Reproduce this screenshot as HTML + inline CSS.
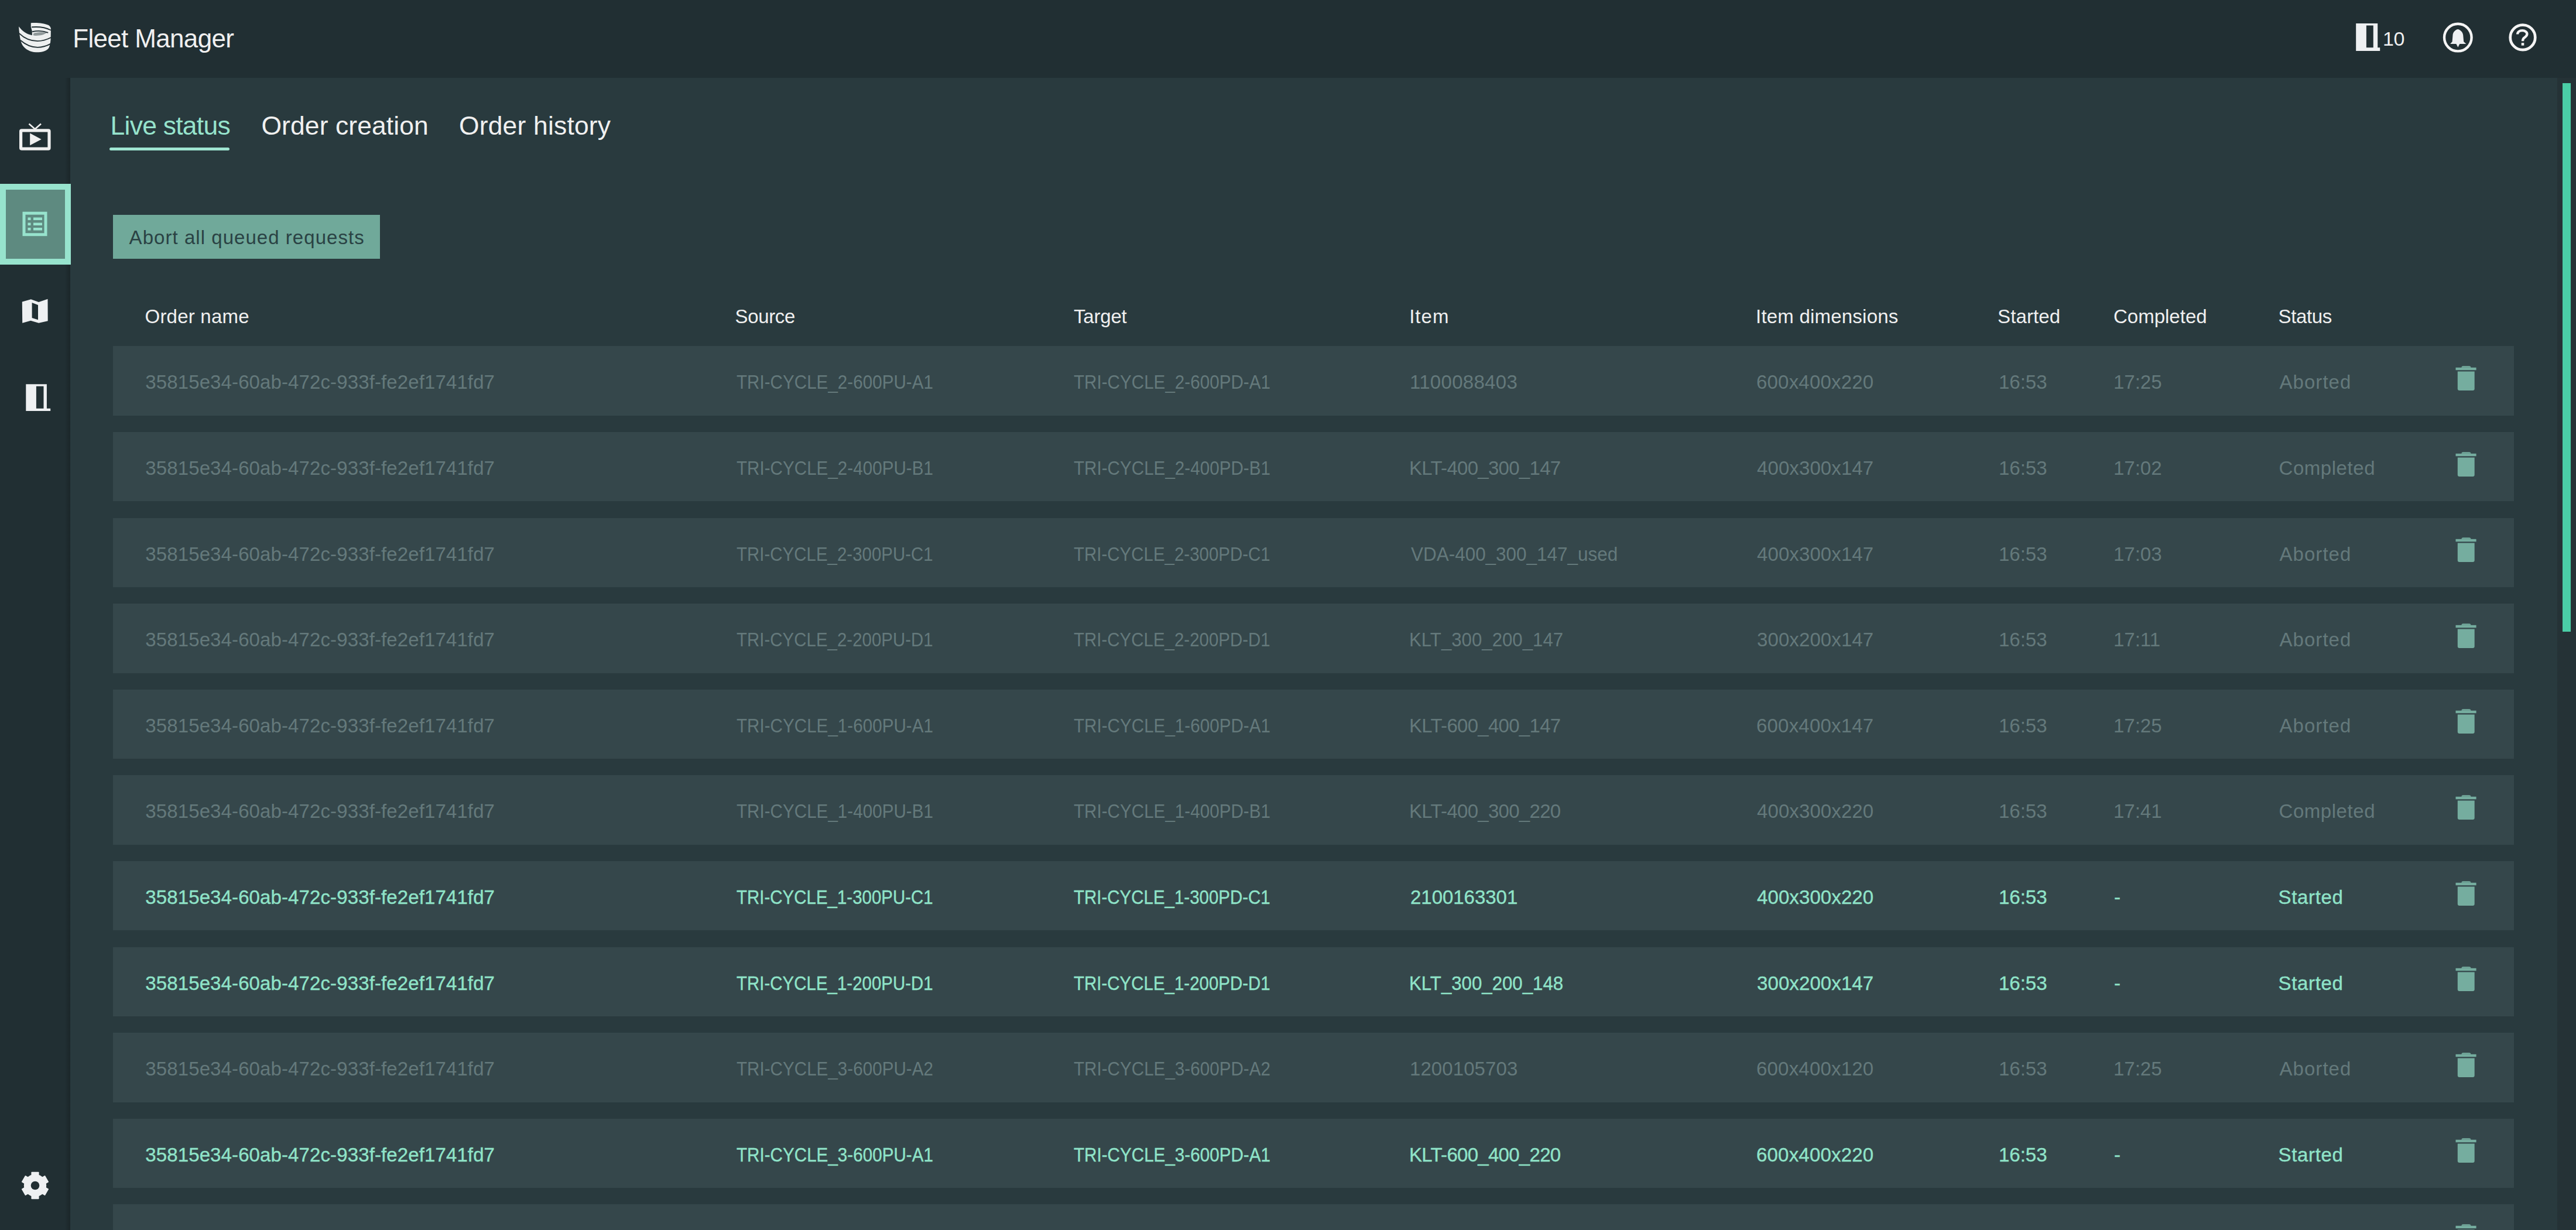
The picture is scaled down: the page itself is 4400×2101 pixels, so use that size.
<!DOCTYPE html>
<html><head><meta charset='utf-8'><title>Fleet Manager</title>
<style>
html,body{margin:0;padding:0;}
body{width:4400px;height:2101px;position:relative;overflow:hidden;background:#212f33;font-family:"Liberation Sans",sans-serif;}
.t{position:absolute;white-space:pre;}
.ic{position:absolute;overflow:visible;}
#content{position:absolute;left:120px;top:133px;width:4248px;height:1968px;background:#293a3e;}
#strip{position:absolute;left:4368px;top:133px;width:32px;height:1968px;background:#253236;}
#thumb{position:absolute;left:4377px;top:142px;width:14px;height:937px;background:#4acea6;}
#shadow{position:absolute;left:110px;top:133px;width:10px;height:1968px;background:linear-gradient(to right, rgba(0,0,0,0), rgba(0,0,0,0.18));}
.row{position:absolute;left:192.5px;width:4101.5px;height:118.5px;background:#35474b;}
#sel{position:absolute;left:0;top:314px;width:101px;height:118px;border:10px solid #97e3cd;background:#5e8a80;}
#btn{position:absolute;left:192.5px;top:366.8px;width:456px;height:75.2px;background:#70a99a;}
#uline{position:absolute;left:187px;top:251.5px;width:205px;height:5px;border-radius:2.5px;background:#9fe6d2;}
</style></head><body>
<div id='content'></div>
<div id='strip'></div>
<div id='thumb'></div>
<div id='shadow'></div>
<div id='sel'></div>
<div id='btn'></div>
<div id='uline'></div>
<div class='row' style='top:591.30px'></div>
<div class='row' style='top:737.90px'></div>
<div class='row' style='top:884.50px'></div>
<div class='row' style='top:1031.10px'></div>
<div class='row' style='top:1177.70px'></div>
<div class='row' style='top:1324.30px'></div>
<div class='row' style='top:1470.90px'></div>
<div class='row' style='top:1617.50px'></div>
<div class='row' style='top:1764.10px'></div>
<div class='row' style='top:1910.70px'></div>
<div class='row' style='top:2057.30px'></div>
<svg class='ic' style='left:4192px;top:620.00px' width='40' height='52' viewBox='0 0 40 52'>
<path d='M12.4 7.8 Q12.4 5.2 15 5.2 L25.5 5.2 Q28.5 5.2 28.5 7.8 Z' fill='#75ad9f'/>
<rect x='2.5' y='7.8' width='35.1' height='4.4' fill='#75ad9f'/>
<path d='M5.8 14.4 L34.7 14.4 L34.7 44 Q34.7 47 31.7 47 L8.8 47 Q5.8 47 5.8 44 Z' fill='#75ad9f'/>
</svg>
<svg class='ic' style='left:4192px;top:766.60px' width='40' height='52' viewBox='0 0 40 52'>
<path d='M12.4 7.8 Q12.4 5.2 15 5.2 L25.5 5.2 Q28.5 5.2 28.5 7.8 Z' fill='#75ad9f'/>
<rect x='2.5' y='7.8' width='35.1' height='4.4' fill='#75ad9f'/>
<path d='M5.8 14.4 L34.7 14.4 L34.7 44 Q34.7 47 31.7 47 L8.8 47 Q5.8 47 5.8 44 Z' fill='#75ad9f'/>
</svg>
<svg class='ic' style='left:4192px;top:913.20px' width='40' height='52' viewBox='0 0 40 52'>
<path d='M12.4 7.8 Q12.4 5.2 15 5.2 L25.5 5.2 Q28.5 5.2 28.5 7.8 Z' fill='#75ad9f'/>
<rect x='2.5' y='7.8' width='35.1' height='4.4' fill='#75ad9f'/>
<path d='M5.8 14.4 L34.7 14.4 L34.7 44 Q34.7 47 31.7 47 L8.8 47 Q5.8 47 5.8 44 Z' fill='#75ad9f'/>
</svg>
<svg class='ic' style='left:4192px;top:1059.80px' width='40' height='52' viewBox='0 0 40 52'>
<path d='M12.4 7.8 Q12.4 5.2 15 5.2 L25.5 5.2 Q28.5 5.2 28.5 7.8 Z' fill='#75ad9f'/>
<rect x='2.5' y='7.8' width='35.1' height='4.4' fill='#75ad9f'/>
<path d='M5.8 14.4 L34.7 14.4 L34.7 44 Q34.7 47 31.7 47 L8.8 47 Q5.8 47 5.8 44 Z' fill='#75ad9f'/>
</svg>
<svg class='ic' style='left:4192px;top:1206.40px' width='40' height='52' viewBox='0 0 40 52'>
<path d='M12.4 7.8 Q12.4 5.2 15 5.2 L25.5 5.2 Q28.5 5.2 28.5 7.8 Z' fill='#75ad9f'/>
<rect x='2.5' y='7.8' width='35.1' height='4.4' fill='#75ad9f'/>
<path d='M5.8 14.4 L34.7 14.4 L34.7 44 Q34.7 47 31.7 47 L8.8 47 Q5.8 47 5.8 44 Z' fill='#75ad9f'/>
</svg>
<svg class='ic' style='left:4192px;top:1353.00px' width='40' height='52' viewBox='0 0 40 52'>
<path d='M12.4 7.8 Q12.4 5.2 15 5.2 L25.5 5.2 Q28.5 5.2 28.5 7.8 Z' fill='#75ad9f'/>
<rect x='2.5' y='7.8' width='35.1' height='4.4' fill='#75ad9f'/>
<path d='M5.8 14.4 L34.7 14.4 L34.7 44 Q34.7 47 31.7 47 L8.8 47 Q5.8 47 5.8 44 Z' fill='#75ad9f'/>
</svg>
<svg class='ic' style='left:4192px;top:1499.60px' width='40' height='52' viewBox='0 0 40 52'>
<path d='M12.4 7.8 Q12.4 5.2 15 5.2 L25.5 5.2 Q28.5 5.2 28.5 7.8 Z' fill='#75ad9f'/>
<rect x='2.5' y='7.8' width='35.1' height='4.4' fill='#75ad9f'/>
<path d='M5.8 14.4 L34.7 14.4 L34.7 44 Q34.7 47 31.7 47 L8.8 47 Q5.8 47 5.8 44 Z' fill='#75ad9f'/>
</svg>
<svg class='ic' style='left:4192px;top:1646.20px' width='40' height='52' viewBox='0 0 40 52'>
<path d='M12.4 7.8 Q12.4 5.2 15 5.2 L25.5 5.2 Q28.5 5.2 28.5 7.8 Z' fill='#75ad9f'/>
<rect x='2.5' y='7.8' width='35.1' height='4.4' fill='#75ad9f'/>
<path d='M5.8 14.4 L34.7 14.4 L34.7 44 Q34.7 47 31.7 47 L8.8 47 Q5.8 47 5.8 44 Z' fill='#75ad9f'/>
</svg>
<svg class='ic' style='left:4192px;top:1792.80px' width='40' height='52' viewBox='0 0 40 52'>
<path d='M12.4 7.8 Q12.4 5.2 15 5.2 L25.5 5.2 Q28.5 5.2 28.5 7.8 Z' fill='#75ad9f'/>
<rect x='2.5' y='7.8' width='35.1' height='4.4' fill='#75ad9f'/>
<path d='M5.8 14.4 L34.7 14.4 L34.7 44 Q34.7 47 31.7 47 L8.8 47 Q5.8 47 5.8 44 Z' fill='#75ad9f'/>
</svg>
<svg class='ic' style='left:4192px;top:1939.40px' width='40' height='52' viewBox='0 0 40 52'>
<path d='M12.4 7.8 Q12.4 5.2 15 5.2 L25.5 5.2 Q28.5 5.2 28.5 7.8 Z' fill='#75ad9f'/>
<rect x='2.5' y='7.8' width='35.1' height='4.4' fill='#75ad9f'/>
<path d='M5.8 14.4 L34.7 14.4 L34.7 44 Q34.7 47 31.7 47 L8.8 47 Q5.8 47 5.8 44 Z' fill='#75ad9f'/>
</svg>
<svg class='ic' style='left:4192px;top:2086.00px' width='40' height='52' viewBox='0 0 40 52'>
<path d='M12.4 7.8 Q12.4 5.2 15 5.2 L25.5 5.2 Q28.5 5.2 28.5 7.8 Z' fill='#75ad9f'/>
<rect x='2.5' y='7.8' width='35.1' height='4.4' fill='#75ad9f'/>
<path d='M5.8 14.4 L34.7 14.4 L34.7 44 Q34.7 47 31.7 47 L8.8 47 Q5.8 47 5.8 44 Z' fill='#75ad9f'/>
</svg>
<!-- logo -->
<svg class='ic' style='left:30px;top:36px' width='60' height='56' viewBox='0 0 1318 1230'>
<path fill='#eef0f0' d='M500,70 C700,50 1000,75 1150,150 C1235,195 1255,260 1250,330 L1245,620 C1240,800 1215,920 1170,1010 C1080,1140 880,1175 690,1170 C470,1160 300,1060 190,910 C110,790 70,560 45,205 C180,380 330,490 545,535 L545,380 L500,215 Z'/>
<path fill='#8f9899' d='M585,480 C650,420 880,400 1090,440 C1000,520 800,560 600,545 Z'/>
<g fill='none' stroke='#212f33' stroke-width='42' stroke-linecap='round'>
<path d='M545,225 C800,205 1060,245 1235,335'/>
<path d='M570,395 C760,355 960,370 1130,430'/>
<path d='M70,470 C300,690 550,750 750,750 C950,750 1110,690 1260,615'/>
<path d='M120,730 C330,910 550,985 750,985 C950,985 1110,925 1240,855'/>
</g>
</svg>
<!-- header door icon -->
<svg class='ic' style='left:4024px;top:40px' width='42' height='47' viewBox='0 0 42 47'>
<path d='M0.2 0 H37.2 V41.2 H41.2 V46.9 H0.2 Z M17.9 3.4 H29.8 V41.2 H17.9 Z' fill='#eef0f2' fill-rule='evenodd'/>
</svg>
<!-- bell -->
<svg class='ic' style='left:4170px;top:36px' width='56' height='56' viewBox='0 0 56 56'>
<circle cx='28.3' cy='28.1' r='23.3' fill='none' stroke='#f4f4f4' stroke-width='4.4'/>
<path d='M28.1 13.9 C24.5 14.3 19.8 18.5 19.5 24 L18.6 35.3 L15.1 39 L42.4 39 L38.2 35.3 L37.2 24 C36.8 18.5 31.8 14.3 28.1 13.9 Z' fill='#eef0f2'/>
<path d='M25.4 39 L31.3 39 L28.4 44.8 Z' fill='#eef0f2'/>
</svg>
<!-- help -->
<svg class='ic' style='left:4281px;top:37px' width='56' height='56' viewBox='0 0 56 56'>
<circle cx='28' cy='26.9' r='21.3' fill='none' stroke='#f4f4f4' stroke-width='4.7'/>
<path d='M19.1 21.6 C19.1 17.5 22.5 15.2 27.3 15.2 C32 15.2 35.4 17.8 35.4 21 C35.4 24.5 32.5 26 30.5 27.5 C28.8 28.8 28 30 28 33.2' fill='none' stroke='#f4f4f4' stroke-width='4.3'/>
<rect x='25.7' y='36.2' width='4.6' height='4.5' fill='#f4f4f4'/>
</svg>
<!-- sidebar tv -->
<svg class='ic' style='left:30px;top:208px' width='60' height='52' viewBox='0 0 60 52'>
<path d='M19.5 3.5 L29.8 12.5 L40 3.5' fill='none' stroke='#f0f0f0' stroke-width='2.6'/>
<rect x='5.6' y='14.8' width='48.4' height='31.4' rx='1.5' fill='none' stroke='#f0f0f0' stroke-width='5.2'/>
<path d='M21.2 19.6 L40.7 30 L21.2 40.3 Z' fill='#f0f0f0'/>
</svg>
<!-- sidebar list (selected) -->
<svg class='ic' style='left:38px;top:361px' width='43' height='43' viewBox='0 0 43 43'>
<rect x='3' y='3.2' width='37' height='36.5' fill='none' stroke='#97e3cd' stroke-width='5'/>
<rect x='9.5' y='10.5' width='5' height='4.5' fill='#97e3cd'/>
<rect x='19' y='10.5' width='15' height='4.5' fill='#97e3cd'/>
<rect x='9.5' y='19.5' width='5' height='4.5' fill='#97e3cd'/>
<rect x='19' y='19.5' width='15' height='4.5' fill='#97e3cd'/>
<rect x='9.5' y='28' width='5' height='4.5' fill='#97e3cd'/>
<rect x='19' y='28' width='15' height='4.5' fill='#97e3cd'/>
</svg>
<!-- sidebar map -->
<svg class='ic' style='left:37px;top:510px' width='48' height='44' viewBox='0 0 48 44'>
<path d='M0.8 5.6 L15.9 1.2 L29.1 6.1 L44.5 0.7 L44.7 38.3 L29.1 41.7 L15.4 37.8 L1.2 41.7 Z M17.6 7.1 L28 11 L28 36.3 L17.6 32.9 Z' fill='#eef0f2' fill-rule='evenodd'/>
</svg>
<!-- sidebar door -->
<svg class='ic' style='left:44px;top:655px' width='44' height='49' viewBox='0 0 44 49'>
<path d='M0.3 1.3 H35.9 V42.8 H42.2 V47.1 H0.3 Z M17.9 4.7 H30.5 V42.8 H17.9 Z' fill='#eef0f2' fill-rule='evenodd'/>
</svg>
<!-- gear -->
<svg class='ic' style='left:35.8px;top:2001px' width='48' height='48' viewBox='-24 -24 48 48'>
<g fill='#eef0f2'>
<circle r='19.2'/>
<rect x='-6.6' y='-23.2' width='13.2' height='23.2' rx='1'/>
<rect x='-6.6' y='-23.2' width='13.2' height='23.2' rx='1' transform='rotate(60)'/>
<rect x='-6.6' y='-23.2' width='13.2' height='23.2' rx='1' transform='rotate(120)'/>
<rect x='-6.6' y='-23.2' width='13.2' height='23.2' rx='1' transform='rotate(180)'/>
<rect x='-6.6' y='-23.2' width='13.2' height='23.2' rx='1' transform='rotate(240)'/>
<rect x='-6.6' y='-23.2' width='13.2' height='23.2' rx='1' transform='rotate(300)'/>
</g>
<circle r='7.3' fill='#212f33'/>
</svg>
<div class='t' style='left:124.20px;top:43.50px;font-size:44px;line-height:44px;color:#f0f0f0;letter-spacing:-0.667px'>Fleet Manager</div>
<div class='t' style='left:4070.00px;top:49.40px;font-size:34px;line-height:34px;color:#f0f0f0;letter-spacing:-0.300px'>10</div>
<div class='t' style='left:188.50px;top:193.00px;font-size:44.5px;line-height:44.5px;color:#96e3cc;letter-spacing:-0.750px'>Live status</div>
<div class='t' style='left:446.40px;top:193.00px;font-size:44.5px;line-height:44.5px;color:#f0f0f0;letter-spacing:0.077px'>Order creation</div>
<div class='t' style='left:783.90px;top:193.00px;font-size:44.5px;line-height:44.5px;color:#f0f0f0;letter-spacing:0.167px'>Order history</div>
<div class='t' style='left:220.60px;top:388.80px;font-size:33px;line-height:33px;color:#2a4244;letter-spacing:1.042px'>Abort all queued requests</div>
<div class='t' style='left:247.50px;top:523.60px;font-size:33px;line-height:33px;color:#f0f0f0;letter-spacing:0.222px'>Order name</div>
<div class='t' style='left:1255.50px;top:523.60px;font-size:33px;line-height:33px;color:#f0f0f0;letter-spacing:-0.340px'>Source</div>
<div class='t' style='left:1834.00px;top:523.60px;font-size:33px;line-height:33px;color:#f0f0f0;letter-spacing:-0.200px'>Target</div>
<div class='t' style='left:2407.20px;top:523.60px;font-size:33px;line-height:33px;color:#f0f0f0;letter-spacing:1.000px'>Item</div>
<div class='t' style='left:2999.00px;top:523.60px;font-size:33px;line-height:33px;color:#f0f0f0;letter-spacing:0.214px'>Item dimensions</div>
<div class='t' style='left:3412.00px;top:523.60px;font-size:33px;line-height:33px;color:#f0f0f0;letter-spacing:0.117px'>Started</div>
<div class='t' style='left:3610.00px;top:523.60px;font-size:33px;line-height:33px;color:#f0f0f0;letter-spacing:0.000px'>Completed</div>
<div class='t' style='left:3891.50px;top:523.60px;font-size:33px;line-height:33px;color:#f0f0f0;letter-spacing:-0.340px'>Status</div>
<div class='t' style='left:248.30px;top:636.40px;font-size:33px;line-height:33px;color:#64797b;letter-spacing:0.114px'>35815e34-60ab-472c-933f-fe2ef1741fd7</div>
<div class='t' style='left:1258.10px;top:636.40px;font-size:33px;line-height:33px;color:#64797b;transform:scaleX(0.8978);transform-origin:0 0'>TRI-CYCLE_2-600PU-A1</div>
<div class='t' style='left:1834.10px;top:636.40px;font-size:33px;line-height:33px;color:#64797b;transform:scaleX(0.8978);transform-origin:0 0'>TRI-CYCLE_2-600PD-A1</div>
<div class='t' style='left:2408.00px;top:636.40px;font-size:33px;line-height:33px;color:#64797b;letter-spacing:0.300px'>1100088403</div>
<div class='t' style='left:3000.00px;top:636.40px;font-size:33px;line-height:33px;color:#64797b;letter-spacing:0.200px'>600x400x220</div>
<div class='t' style='left:3414.00px;top:636.40px;font-size:33px;line-height:33px;color:#64797b;letter-spacing:0.000px'>16:53</div>
<div class='t' style='left:3610.00px;top:636.40px;font-size:33px;line-height:33px;color:#64797b;letter-spacing:0.000px'>17:25</div>
<div class='t' style='left:3893.50px;top:636.40px;font-size:33px;line-height:33px;color:#64797b;letter-spacing:1.050px'>Aborted</div>
<div class='t' style='left:248.30px;top:783.00px;font-size:33px;line-height:33px;color:#64797b;letter-spacing:0.114px'>35815e34-60ab-472c-933f-fe2ef1741fd7</div>
<div class='t' style='left:1258.10px;top:783.00px;font-size:33px;line-height:33px;color:#64797b;transform:scaleX(0.8978);transform-origin:0 0'>TRI-CYCLE_2-400PU-B1</div>
<div class='t' style='left:1834.10px;top:783.00px;font-size:33px;line-height:33px;color:#64797b;transform:scaleX(0.8978);transform-origin:0 0'>TRI-CYCLE_2-400PD-B1</div>
<div class='t' style='left:2407.00px;top:783.00px;font-size:33px;line-height:33px;color:#64797b;letter-spacing:-0.714px'>KLT-400_300_147</div>
<div class='t' style='left:3001.00px;top:783.00px;font-size:33px;line-height:33px;color:#64797b;letter-spacing:0.100px'>400x300x147</div>
<div class='t' style='left:3414.00px;top:783.00px;font-size:33px;line-height:33px;color:#64797b;letter-spacing:0.000px'>16:53</div>
<div class='t' style='left:3610.00px;top:783.00px;font-size:33px;line-height:33px;color:#64797b;letter-spacing:0.000px'>17:02</div>
<div class='t' style='left:3892.50px;top:783.00px;font-size:33px;line-height:33px;color:#64797b;letter-spacing:0.550px'>Completed</div>
<div class='t' style='left:248.30px;top:929.60px;font-size:33px;line-height:33px;color:#64797b;letter-spacing:0.114px'>35815e34-60ab-472c-933f-fe2ef1741fd7</div>
<div class='t' style='left:1258.11px;top:929.60px;font-size:33px;line-height:33px;color:#64797b;transform:scaleX(0.8930);transform-origin:0 0'>TRI-CYCLE_2-300PU-C1</div>
<div class='t' style='left:1834.11px;top:929.60px;font-size:33px;line-height:33px;color:#64797b;transform:scaleX(0.8930);transform-origin:0 0'>TRI-CYCLE_2-300PD-C1</div>
<div class='t' style='left:2410.00px;top:929.60px;font-size:33px;line-height:33px;color:#64797b;transform:scaleX(0.9531);transform-origin:0 0'>VDA-400_300_147_used</div>
<div class='t' style='left:3001.00px;top:929.60px;font-size:33px;line-height:33px;color:#64797b;letter-spacing:0.100px'>400x300x147</div>
<div class='t' style='left:3414.00px;top:929.60px;font-size:33px;line-height:33px;color:#64797b;letter-spacing:0.000px'>16:53</div>
<div class='t' style='left:3610.00px;top:929.60px;font-size:33px;line-height:33px;color:#64797b;letter-spacing:0.000px'>17:03</div>
<div class='t' style='left:3893.50px;top:929.60px;font-size:33px;line-height:33px;color:#64797b;letter-spacing:1.050px'>Aborted</div>
<div class='t' style='left:248.30px;top:1076.20px;font-size:33px;line-height:33px;color:#64797b;letter-spacing:0.114px'>35815e34-60ab-472c-933f-fe2ef1741fd7</div>
<div class='t' style='left:1258.11px;top:1076.20px;font-size:33px;line-height:33px;color:#64797b;transform:scaleX(0.8930);transform-origin:0 0'>TRI-CYCLE_2-200PU-D1</div>
<div class='t' style='left:1834.11px;top:1076.20px;font-size:33px;line-height:33px;color:#64797b;transform:scaleX(0.8930);transform-origin:0 0'>TRI-CYCLE_2-200PD-D1</div>
<div class='t' style='left:2407.16px;top:1076.20px;font-size:33px;line-height:33px;color:#64797b;transform:scaleX(0.9453);transform-origin:0 0'>KLT_300_200_147</div>
<div class='t' style='left:3001.00px;top:1076.20px;font-size:33px;line-height:33px;color:#64797b;letter-spacing:0.100px'>300x200x147</div>
<div class='t' style='left:3414.00px;top:1076.20px;font-size:33px;line-height:33px;color:#64797b;letter-spacing:0.000px'>16:53</div>
<div class='t' style='left:3610.00px;top:1076.20px;font-size:33px;line-height:33px;color:#64797b;letter-spacing:0.000px'>17:11</div>
<div class='t' style='left:3893.50px;top:1076.20px;font-size:33px;line-height:33px;color:#64797b;letter-spacing:1.050px'>Aborted</div>
<div class='t' style='left:248.30px;top:1222.80px;font-size:33px;line-height:33px;color:#64797b;letter-spacing:0.114px'>35815e34-60ab-472c-933f-fe2ef1741fd7</div>
<div class='t' style='left:1258.10px;top:1222.80px;font-size:33px;line-height:33px;color:#64797b;transform:scaleX(0.8978);transform-origin:0 0'>TRI-CYCLE_1-600PU-A1</div>
<div class='t' style='left:1834.10px;top:1222.80px;font-size:33px;line-height:33px;color:#64797b;transform:scaleX(0.8978);transform-origin:0 0'>TRI-CYCLE_1-600PD-A1</div>
<div class='t' style='left:2407.00px;top:1222.80px;font-size:33px;line-height:33px;color:#64797b;letter-spacing:-0.714px'>KLT-600_400_147</div>
<div class='t' style='left:3000.00px;top:1222.80px;font-size:33px;line-height:33px;color:#64797b;letter-spacing:0.200px'>600x400x147</div>
<div class='t' style='left:3414.00px;top:1222.80px;font-size:33px;line-height:33px;color:#64797b;letter-spacing:0.000px'>16:53</div>
<div class='t' style='left:3610.00px;top:1222.80px;font-size:33px;line-height:33px;color:#64797b;letter-spacing:0.000px'>17:25</div>
<div class='t' style='left:3893.50px;top:1222.80px;font-size:33px;line-height:33px;color:#64797b;letter-spacing:1.050px'>Aborted</div>
<div class='t' style='left:248.30px;top:1369.40px;font-size:33px;line-height:33px;color:#64797b;letter-spacing:0.114px'>35815e34-60ab-472c-933f-fe2ef1741fd7</div>
<div class='t' style='left:1258.10px;top:1369.40px;font-size:33px;line-height:33px;color:#64797b;transform:scaleX(0.8978);transform-origin:0 0'>TRI-CYCLE_1-400PU-B1</div>
<div class='t' style='left:1834.10px;top:1369.40px;font-size:33px;line-height:33px;color:#64797b;transform:scaleX(0.8978);transform-origin:0 0'>TRI-CYCLE_1-400PD-B1</div>
<div class='t' style='left:2407.00px;top:1369.40px;font-size:33px;line-height:33px;color:#64797b;letter-spacing:-0.714px'>KLT-400_300_220</div>
<div class='t' style='left:3001.00px;top:1369.40px;font-size:33px;line-height:33px;color:#64797b;letter-spacing:0.100px'>400x300x220</div>
<div class='t' style='left:3414.00px;top:1369.40px;font-size:33px;line-height:33px;color:#64797b;letter-spacing:0.000px'>16:53</div>
<div class='t' style='left:3610.00px;top:1369.40px;font-size:33px;line-height:33px;color:#64797b;letter-spacing:0.000px'>17:41</div>
<div class='t' style='left:3892.50px;top:1369.40px;font-size:33px;line-height:33px;color:#64797b;letter-spacing:0.550px'>Completed</div>
<div class='t' style='left:248.30px;top:1516.00px;font-size:33px;line-height:33px;color:#8fe3c8;letter-spacing:0.114px;-webkit-text-stroke:0.4px #8fe3c8'>35815e34-60ab-472c-933f-fe2ef1741fd7</div>
<div class='t' style='left:1258.11px;top:1516.00px;font-size:33px;line-height:33px;color:#8fe3c8;transform:scaleX(0.8930);transform-origin:0 0;-webkit-text-stroke:0.4px #8fe3c8'>TRI-CYCLE_1-300PU-C1</div>
<div class='t' style='left:1834.11px;top:1516.00px;font-size:33px;line-height:33px;color:#8fe3c8;transform:scaleX(0.8930);transform-origin:0 0;-webkit-text-stroke:0.4px #8fe3c8'>TRI-CYCLE_1-300PD-C1</div>
<div class='t' style='left:2409.00px;top:1516.00px;font-size:33px;line-height:33px;color:#8fe3c8;letter-spacing:-0.033px;-webkit-text-stroke:0.4px #8fe3c8'>2100163301</div>
<div class='t' style='left:3001.00px;top:1516.00px;font-size:33px;line-height:33px;color:#8fe3c8;letter-spacing:0.100px;-webkit-text-stroke:0.4px #8fe3c8'>400x300x220</div>
<div class='t' style='left:3414.00px;top:1516.00px;font-size:33px;line-height:33px;color:#8fe3c8;letter-spacing:0.000px;-webkit-text-stroke:0.4px #8fe3c8'>16:53</div>
<div class='t' style='left:3611.00px;top:1516.00px;font-size:33px;line-height:33px;color:#8fe3c8;letter-spacing:0.000px;-webkit-text-stroke:0.4px #8fe3c8'>-</div>
<div class='t' style='left:3891.50px;top:1516.00px;font-size:33px;line-height:33px;color:#8fe3c8;letter-spacing:0.667px;-webkit-text-stroke:0.4px #8fe3c8'>Started</div>
<div class='t' style='left:248.30px;top:1662.60px;font-size:33px;line-height:33px;color:#8fe3c8;letter-spacing:0.114px;-webkit-text-stroke:0.4px #8fe3c8'>35815e34-60ab-472c-933f-fe2ef1741fd7</div>
<div class='t' style='left:1258.11px;top:1662.60px;font-size:33px;line-height:33px;color:#8fe3c8;transform:scaleX(0.8930);transform-origin:0 0;-webkit-text-stroke:0.4px #8fe3c8'>TRI-CYCLE_1-200PU-D1</div>
<div class='t' style='left:1834.11px;top:1662.60px;font-size:33px;line-height:33px;color:#8fe3c8;transform:scaleX(0.8930);transform-origin:0 0;-webkit-text-stroke:0.4px #8fe3c8'>TRI-CYCLE_1-200PD-D1</div>
<div class='t' style='left:2407.16px;top:1662.60px;font-size:33px;line-height:33px;color:#8fe3c8;transform:scaleX(0.9453);transform-origin:0 0;-webkit-text-stroke:0.4px #8fe3c8'>KLT_300_200_148</div>
<div class='t' style='left:3001.00px;top:1662.60px;font-size:33px;line-height:33px;color:#8fe3c8;letter-spacing:0.100px;-webkit-text-stroke:0.4px #8fe3c8'>300x200x147</div>
<div class='t' style='left:3414.00px;top:1662.60px;font-size:33px;line-height:33px;color:#8fe3c8;letter-spacing:0.000px;-webkit-text-stroke:0.4px #8fe3c8'>16:53</div>
<div class='t' style='left:3611.00px;top:1662.60px;font-size:33px;line-height:33px;color:#8fe3c8;letter-spacing:0.000px;-webkit-text-stroke:0.4px #8fe3c8'>-</div>
<div class='t' style='left:3891.50px;top:1662.60px;font-size:33px;line-height:33px;color:#8fe3c8;letter-spacing:0.667px;-webkit-text-stroke:0.4px #8fe3c8'>Started</div>
<div class='t' style='left:248.30px;top:1809.20px;font-size:33px;line-height:33px;color:#64797b;letter-spacing:0.114px'>35815e34-60ab-472c-933f-fe2ef1741fd7</div>
<div class='t' style='left:1258.10px;top:1809.20px;font-size:33px;line-height:33px;color:#64797b;transform:scaleX(0.8978);transform-origin:0 0'>TRI-CYCLE_3-600PU-A2</div>
<div class='t' style='left:1834.10px;top:1809.20px;font-size:33px;line-height:33px;color:#64797b;transform:scaleX(0.8978);transform-origin:0 0'>TRI-CYCLE_3-600PD-A2</div>
<div class='t' style='left:2408.00px;top:1809.20px;font-size:33px;line-height:33px;color:#64797b;letter-spacing:0.078px'>1200105703</div>
<div class='t' style='left:3000.00px;top:1809.20px;font-size:33px;line-height:33px;color:#64797b;letter-spacing:0.200px'>600x400x120</div>
<div class='t' style='left:3414.00px;top:1809.20px;font-size:33px;line-height:33px;color:#64797b;letter-spacing:0.000px'>16:53</div>
<div class='t' style='left:3610.00px;top:1809.20px;font-size:33px;line-height:33px;color:#64797b;letter-spacing:0.000px'>17:25</div>
<div class='t' style='left:3893.50px;top:1809.20px;font-size:33px;line-height:33px;color:#64797b;letter-spacing:1.050px'>Aborted</div>
<div class='t' style='left:248.30px;top:1955.80px;font-size:33px;line-height:33px;color:#8fe3c8;letter-spacing:0.114px;-webkit-text-stroke:0.4px #8fe3c8'>35815e34-60ab-472c-933f-fe2ef1741fd7</div>
<div class='t' style='left:1258.10px;top:1955.80px;font-size:33px;line-height:33px;color:#8fe3c8;transform:scaleX(0.8978);transform-origin:0 0;-webkit-text-stroke:0.4px #8fe3c8'>TRI-CYCLE_3-600PU-A1</div>
<div class='t' style='left:1834.10px;top:1955.80px;font-size:33px;line-height:33px;color:#8fe3c8;transform:scaleX(0.8978);transform-origin:0 0;-webkit-text-stroke:0.4px #8fe3c8'>TRI-CYCLE_3-600PD-A1</div>
<div class='t' style='left:2407.00px;top:1955.80px;font-size:33px;line-height:33px;color:#8fe3c8;letter-spacing:-0.714px;-webkit-text-stroke:0.4px #8fe3c8'>KLT-600_400_220</div>
<div class='t' style='left:3000.00px;top:1955.80px;font-size:33px;line-height:33px;color:#8fe3c8;letter-spacing:0.200px;-webkit-text-stroke:0.4px #8fe3c8'>600x400x220</div>
<div class='t' style='left:3414.00px;top:1955.80px;font-size:33px;line-height:33px;color:#8fe3c8;letter-spacing:0.000px;-webkit-text-stroke:0.4px #8fe3c8'>16:53</div>
<div class='t' style='left:3611.00px;top:1955.80px;font-size:33px;line-height:33px;color:#8fe3c8;letter-spacing:0.000px;-webkit-text-stroke:0.4px #8fe3c8'>-</div>
<div class='t' style='left:3891.50px;top:1955.80px;font-size:33px;line-height:33px;color:#8fe3c8;letter-spacing:0.667px;-webkit-text-stroke:0.4px #8fe3c8'>Started</div>
</body></html>
